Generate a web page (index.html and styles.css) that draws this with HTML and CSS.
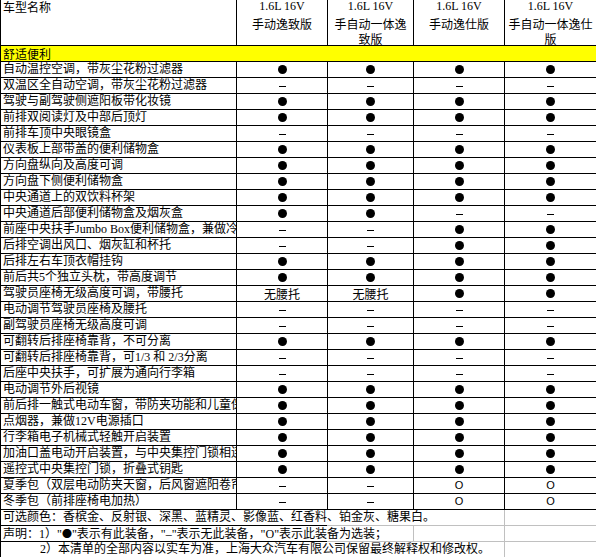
FILE: index.html
```html
<!DOCTYPE html>
<html lang="zh-CN">
<head>
<meta charset="utf-8">
<title>车型配置表</title>
<link rel="stylesheet" href="styles.css">
</head>
<body>
<div class="sheet">
  <div class="cell c1 head"><div class="ttl">车型名称</div></div>
  <div class="cell head"><div class="ver">1.6L 16V</div><div class="nm">手动逸致版</div></div>
  <div class="cell head"><div class="ver">1.6L 16V</div><div class="nm">手自动一体逸<br>致版</div></div>
  <div class="cell head"><div class="ver">1.6L 16V</div><div class="nm">手动逸仕版</div></div>
  <div class="cell head"><div class="ver">1.6L 16V</div><div class="nm">手自动一体逸仕<br>版</div></div>

  <div class="cell section">舒适便利</div>

  <div class="cell c1">自动温控空调，带灰尘花粉过滤器</div>
  <div class="cell v"><i class="dot"></i></div><div class="cell v"><i class="dot"></i></div><div class="cell v"><i class="dot"></i></div><div class="cell v"><i class="dot"></i></div>

  <div class="cell c1">双温区全自动空调，带灰尘花粉过滤器</div>
  <div class="cell v"><i class="dash"></i></div><div class="cell v"><i class="dash"></i></div><div class="cell v"><i class="dash"></i></div><div class="cell v"><i class="dash"></i></div>

  <div class="cell c1">驾驶与副驾驶侧遮阳板带化妆镜</div>
  <div class="cell v"><i class="dot"></i></div><div class="cell v"><i class="dot"></i></div><div class="cell v"><i class="dot"></i></div><div class="cell v"><i class="dot"></i></div>

  <div class="cell c1">前排双阅读灯及中部后顶灯</div>
  <div class="cell v"><i class="dot"></i></div><div class="cell v"><i class="dot"></i></div><div class="cell v"><i class="dot"></i></div><div class="cell v"><i class="dot"></i></div>

  <div class="cell c1">前排车顶中央眼镜盒</div>
  <div class="cell v"><i class="dash"></i></div><div class="cell v"><i class="dash"></i></div><div class="cell v"><i class="dash"></i></div><div class="cell v"><i class="dash"></i></div>

  <div class="cell c1">仪表板上部带盖的便利储物盒</div>
  <div class="cell v"><i class="dot"></i></div><div class="cell v"><i class="dot"></i></div><div class="cell v"><i class="dot"></i></div><div class="cell v"><i class="dot"></i></div>

  <div class="cell c1">方向盘纵向及高度可调</div>
  <div class="cell v"><i class="dot"></i></div><div class="cell v"><i class="dot"></i></div><div class="cell v"><i class="dot"></i></div><div class="cell v"><i class="dot"></i></div>

  <div class="cell c1">方向盘下侧便利储物盒</div>
  <div class="cell v"><i class="dot"></i></div><div class="cell v"><i class="dot"></i></div><div class="cell v"><i class="dot"></i></div><div class="cell v"><i class="dot"></i></div>

  <div class="cell c1">中央通道上的双饮料杯架</div>
  <div class="cell v"><i class="dot"></i></div><div class="cell v"><i class="dot"></i></div><div class="cell v"><i class="dot"></i></div><div class="cell v"><i class="dot"></i></div>

  <div class="cell c1">中央通道后部便利储物盒及烟灰盒</div>
  <div class="cell v"><i class="dot"></i></div><div class="cell v"><i class="dot"></i></div><div class="cell v"><i class="dash"></i></div><div class="cell v"><i class="dash"></i></div>

  <div class="cell c1">前座中央扶手Jumbo Box便利储物盒，兼做冷藏箱</div>
  <div class="cell v"><i class="dash"></i></div><div class="cell v"><i class="dash"></i></div><div class="cell v"><i class="dot"></i></div><div class="cell v"><i class="dot"></i></div>

  <div class="cell c1">后排空调出风口、烟灰缸和杯托</div>
  <div class="cell v"><i class="dash"></i></div><div class="cell v"><i class="dash"></i></div><div class="cell v"><i class="dot"></i></div><div class="cell v"><i class="dot"></i></div>

  <div class="cell c1">后排左右车顶衣帽挂钩</div>
  <div class="cell v"><i class="dot"></i></div><div class="cell v"><i class="dot"></i></div><div class="cell v"><i class="dot"></i></div><div class="cell v"><i class="dot"></i></div>

  <div class="cell c1">前后共5个独立头枕，带高度调节</div>
  <div class="cell v"><i class="dot"></i></div><div class="cell v"><i class="dot"></i></div><div class="cell v"><i class="dot"></i></div><div class="cell v"><i class="dot"></i></div>

  <div class="cell c1">驾驶员座椅无级高度可调，带腰托</div>
  <div class="cell v txt">无腰托</div><div class="cell v txt">无腰托</div><div class="cell v"><i class="dot"></i></div><div class="cell v"><i class="dot"></i></div>

  <div class="cell c1">电动调节驾驶员座椅及腰托</div>
  <div class="cell v"><i class="dash"></i></div><div class="cell v"><i class="dash"></i></div><div class="cell v"><i class="dash"></i></div><div class="cell v"><i class="dash"></i></div>

  <div class="cell c1">副驾驶员座椅无级高度可调</div>
  <div class="cell v"><i class="dash"></i></div><div class="cell v"><i class="dash"></i></div><div class="cell v"><i class="dash"></i></div><div class="cell v"><i class="dash"></i></div>

  <div class="cell c1">可翻转后排座椅靠背，不可分离</div>
  <div class="cell v"><i class="dot"></i></div><div class="cell v"><i class="dot"></i></div><div class="cell v"><i class="dot"></i></div><div class="cell v"><i class="dot"></i></div>

  <div class="cell c1">可翻转后排座椅靠背，可1/3 和 2/3分离</div>
  <div class="cell v"><i class="dash"></i></div><div class="cell v"><i class="dash"></i></div><div class="cell v"><i class="dash"></i></div><div class="cell v"><i class="dash"></i></div>

  <div class="cell c1">后座中央扶手，可扩展为通向行李箱</div>
  <div class="cell v"><i class="dash"></i></div><div class="cell v"><i class="dash"></i></div><div class="cell v"><i class="dash"></i></div><div class="cell v"><i class="dash"></i></div>

  <div class="cell c1">电动调节外后视镜</div>
  <div class="cell v"><i class="dot"></i></div><div class="cell v"><i class="dot"></i></div><div class="cell v"><i class="dot"></i></div><div class="cell v"><i class="dot"></i></div>

  <div class="cell c1">前后排一触式电动车窗，带防夹功能和儿童保护</div>
  <div class="cell v"><i class="dot"></i></div><div class="cell v"><i class="dot"></i></div><div class="cell v"><i class="dot"></i></div><div class="cell v"><i class="dot"></i></div>

  <div class="cell c1">点烟器，兼做12V电源插口</div>
  <div class="cell v"><i class="dot"></i></div><div class="cell v"><i class="dot"></i></div><div class="cell v"><i class="dot"></i></div><div class="cell v"><i class="dot"></i></div>

  <div class="cell c1">行李箱电子机械式轻触开启装置</div>
  <div class="cell v"><i class="dot"></i></div><div class="cell v"><i class="dot"></i></div><div class="cell v"><i class="dot"></i></div><div class="cell v"><i class="dot"></i></div>

  <div class="cell c1">加油口盖电动开启装置，与中央集控门锁相连</div>
  <div class="cell v"><i class="dot"></i></div><div class="cell v"><i class="dot"></i></div><div class="cell v"><i class="dot"></i></div><div class="cell v"><i class="dot"></i></div>

  <div class="cell c1">遥控式中央集控门锁，折叠式钥匙</div>
  <div class="cell v"><i class="dot"></i></div><div class="cell v"><i class="dot"></i></div><div class="cell v"><i class="dot"></i></div><div class="cell v"><i class="dot"></i></div>

  <div class="cell c1">夏季包（双层电动防夹天窗，后风窗遮阳卷帘）</div>
  <div class="cell v"><i class="dash"></i></div><div class="cell v"><i class="dash"></i></div><div class="cell v o">O</div><div class="cell v o">O</div>

  <div class="cell c1">冬季包（前排座椅电加热）</div>
  <div class="cell v"><i class="dash"></i></div><div class="cell v"><i class="dash"></i></div><div class="cell v o">O</div><div class="cell v o">O</div>
</div>

<div class="foot">
  <div class="fc fa">可选颜色：香槟金、反射银、深黑、蓝精灵、影像蓝、红香料、铂金灰、糖果白。</div>
  <div class="fc"></div><div class="fc"></div><div class="fc gl"></div>

  <div class="fc fa">声明：1）"<span class="fdot">●</span>"表示有此装备，"–"表示无此装备，"O"表示此装备为选装；</div>
  <div class="fc"></div><div class="fc gl"></div><div class="fc gl"></div>

  <div class="fc fa ind">2）本清单的全部内容以实车为准，上海大众汽车有限公司保留最终解释权和修改权。</div>
  <div class="fc"></div><div class="fc"></div><div class="fc gl"></div>
</div>
</body>
</html>
```

FILE: styles.css
```css
html, body {
  margin: 0;
  padding: 0;
  background: #ffffff;
  overflow: hidden;
}

body {
  width: 596px;
  font-family: "Liberation Serif", "Noto Sans CJK SC", serif;
  font-size: 12px;
  color: #000000;
}

.sheet {
  display: grid;
  grid-template-columns: 236px 91px 86px 91px 92px;
  grid-template-rows: 46px;
  grid-auto-rows: 16px;
}

.cell {
  box-sizing: border-box;
  border-left: 1px solid #000000;
  border-bottom: 1px solid #000000;
  line-height: 15px;
  white-space: nowrap;
  overflow: hidden;
}

.c1 {
  padding-left: 2px;
  text-align: left;
}

.head {
  text-align: center;
}

.head.c1 {
  text-align: left;
}

.ttl {
  font-family: "Noto Sans CJK SC", sans-serif;
  line-height: 14px;
}

.ver {
  height: 16px;
  line-height: 13px;
}

.nm {
  font-family: "Noto Sans CJK SC", sans-serif;
  line-height: 15px;
}

.section {
  grid-column: 1 / -1;
  background: #ffff00;
  padding-left: 2px;
  font-family: "Noto Sans CJK SC", sans-serif;
}

.v {
  text-align: center;
}

.txt {
  font-family: "Noto Sans CJK SC", sans-serif;
}

.dot {
  display: block;
  width: 9px;
  height: 9px;
  margin: 3px auto 0;
  border-radius: 50%;
  background: #000000;
}

.dash {
  display: block;
  width: 7px;
  height: 1px;
  margin: 8px auto 0;
  background: #000000;
}

.o {
  font-family: "Liberation Sans", sans-serif;
  font-size: 11px;
}

.foot {
  display: grid;
  grid-template-columns: 327px 86px 91px 92px;
  grid-auto-rows: 16px;
}

.fc {
  box-sizing: border-box;
  border-bottom: 1px solid #c0c0c0;
  line-height: 15px;
}

.fa {
  border-left: 1px solid #000000;
  border-bottom-color: #000000;
  padding-left: 2px;
  white-space: nowrap;
  overflow: visible;
}

.fdot {
  font-family: "Noto Sans CJK SC", sans-serif;
  font-size: 10px;
}

.ind {
  padding-left: 39px;
}

.gl {
  border-left: 1px solid #c0c0c0;
}
```
